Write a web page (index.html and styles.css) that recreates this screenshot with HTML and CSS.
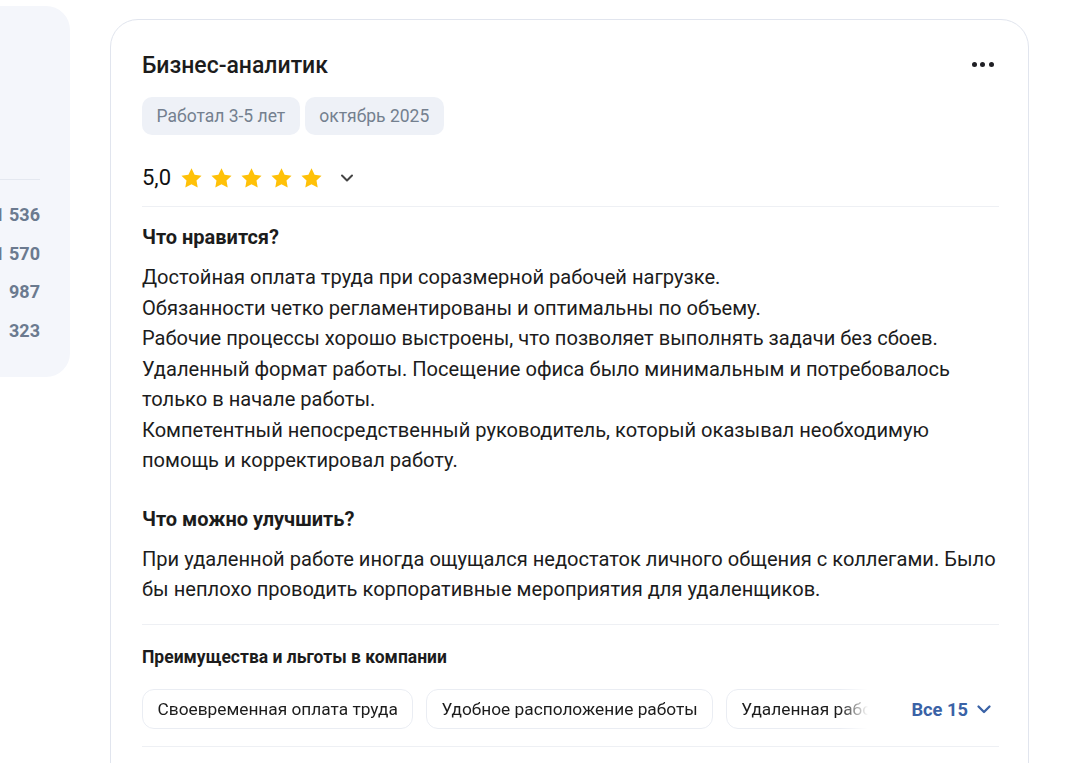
FILE: index.html
```html
<!DOCTYPE html>
<html lang="ru">
<head>
<meta charset="utf-8">
<title>Отзыв</title>
<link rel="stylesheet" href="styles.css">
</head>
<body>
<div class="page">
  <aside class="side">
    <div class="side-top"></div>
    <div class="side-sep"></div>
    <ul class="side-list">
      <li>1 536</li>
      <li>1 570</li>
      <li>987</li>
      <li>323</li>
    </ul>
  </aside>
  <article class="card">
    <div class="head">
      <h2 class="title">Бизнес-аналитик</h2>
      <button class="more" aria-label="Ещё"><span></span><span></span><span></span></button>
    </div>
    <div class="tags">
      <span class="tag">Работал 3-5 лет</span>
      <span class="tag">октябрь 2025</span>
    </div>
    <div class="rating">
      <span class="score">5,0</span>
      <span class="stars">
        <svg viewBox="0 0 24 24"><path d="M12 2.2l2.95 6.1 6.7.95-4.85 4.7 1.15 6.65L12 17.45 6.05 20.6 7.2 13.950 2.35 9.25l6.7-.95z"/></svg>
        <svg viewBox="0 0 24 24"><path d="M12 2.2l2.95 6.1 6.7.95-4.85 4.7 1.15 6.65L12 17.45 6.05 20.6 7.2 13.95 2.35 9.25l6.7-.95z"/></svg>
        <svg viewBox="0 0 24 24"><path d="M12 2.2l2.95 6.1 6.7.95-4.85 4.7 1.15 6.65L12 17.45 6.05 20.6 7.2 13.95 2.35 9.25l6.7-.95z"/></svg>
        <svg viewBox="0 0 24 24"><path d="M12 2.2l2.95 6.1 6.7.95-4.85 4.7 1.15 6.65L12 17.45 6.05 20.6 7.2 13.95 2.35 9.25l6.7-.95z"/></svg>
        <svg viewBox="0 0 24 24"><path d="M12 2.2l2.95 6.1 6.7.95-4.85 4.7 1.15 6.65L12 17.45 6.05 20.6 7.2 13.95 2.35 9.25l6.7-.95z"/></svg>
      </span>
      <svg class="chev" viewBox="0 0 16 16"><path d="M3 5.5l5 5 5-5" fill="none" stroke="currentColor" stroke-width="2" stroke-linecap="round" stroke-linejoin="round"/></svg>
    </div>
    <div class="sep"></div>
    <section class="block">
      <h3 class="block-title">Что нравится?</h3>
      <p class="text">Достойная оплата труда при соразмерной рабочей нагрузке.<br>Обязанности четко регламентированы и оптимальны по объему.<br>Рабочие процессы хорошо выстроены, что позволяет выполнять задачи без сбоев.<br>Удаленный формат работы. Посещение офиса было минимальным и потребовалось только в начале работы.<br>Компетентный непосредственный руководитель, который оказывал необходимую помощь и корректировал работу.</p>
    </section>
    <section class="block block-2">
      <h3 class="block-title">Что можно улучшить?</h3>
      <p class="text">При удаленной работе иногда ощущался недостаток личного общения с коллегами. Было бы неплохо проводить корпоративные мероприятия для удаленщиков.</p>
    </section>
    <div class="sep sep-2"></div>
    <section class="benefits">
      <h4 class="benefits-title">Преимущества и льготы в компании</h4>
      <div class="benefits-row">
        <div class="chips">
          <span class="chip">Своевременная оплата труда</span>
          <span class="chip">Удобное расположение работы</span>
          <span class="chip">Удаленная работа</span>
          <span class="chip">Гибкий график</span>
        </div>
        <button class="all">Все 15
          <svg viewBox="0 0 18 18"><path d="M3.5 6.5l5.5 5.5 5.5-5.5" fill="none" stroke="currentColor" stroke-width="2.3" stroke-linecap="round" stroke-linejoin="round"/></svg>
        </button>
      </div>
    </section>
    <div class="sep sep-3"></div>
  </article>
</div>
</body>
</html>
```

FILE: styles.css
```css
* { box-sizing: border-box; }
html, body { margin: 0; padding: 0; background: #fff; }
body {
  font-family: Roboto, "Noto Sans", "Liberation Sans", sans-serif;
  color: #1a1a1a;
  height: 763px;
  overflow: hidden;
}
.page {
  display: flex;
  align-items: flex-start;
}
.side {
  margin-left: -230px;
  margin-top: 6px;
  width: 300px;
  height: 371px;
  background: #f4f6fb;
  border-radius: 0 24px 24px 0;
  padding: 0 30px 0 0;
  flex-shrink: 0;
}
.side-top { height: 173px; }
.side-sep {
  height: 1px;
  background: #e4e8f0;
}
.side-list {
  list-style: none;
  margin: 0;
  padding: 25px 0 0;
  display: flex;
  flex-direction: column;
  gap: 18.7px;
  text-align: right;
}
.side-list li {
  font-size: 18px;
  line-height: 20px;
  font-weight: 700;
  color: #6b7a8f;
}
.card {
  margin-left: 40px;
  margin-top: 19px;
  width: 919px;
  flex-shrink: 0;
  height: 900px;
  border: 1px solid #e1e5ee;
  border-radius: 28px;
  padding: 32px 29px 0 31px;
}
.head {
  display: flex;
  align-items: center;
  justify-content: space-between;
  height: 28px;
}
.title {
  margin: 0;
  font-size: 23px;
  line-height: 28px;
  font-weight: 500;
  color: #1c1c1c;
}
.more {
  display: flex;
  gap: 3.7px;
  border: 0;
  background: none;
  padding: 0;
  margin-right: 5px;
  margin-top: -4px;
}
.more span {
  width: 5px;
  height: 5px;
  border-radius: 50%;
  background: #1f1f24;
}
.tags {
  display: flex;
  gap: 5px;
  margin-top: 17px;
}
.tag {
  display: inline-flex;
  align-items: center;
  height: 38px;
  padding: 0 14.5px;
  background: #eef1f7;
  border-radius: 10px;
  font-size: 17.5px;
  color: #74808f;
}
.rating {
  display: flex;
  align-items: center;
  margin-top: 28px;
  height: 30px;
}
.score {
  font-size: 22px;
  line-height: 30px;
  color: #111;
  margin-right: 8px;
}
.stars {
  display: flex;
  gap: 5px;
}
.stars svg {
  width: 25px;
  height: 25px;
  fill: #ffc107;
}
.chev {
  width: 16px;
  height: 16px;
  margin-left: 15px;
  color: #444;
}
.sep {
  height: 1px;
  background: #eef0f4;
  margin-top: 13px;
}
.block { margin-top: 17px; }
.block-2 { margin-top: 30px; }
.block-title {
  margin: 0;
  font-size: 20px;
  line-height: 26px;
  font-weight: 700;
  color: #1c1c1c;
}
.text {
  margin: 12px 0 0;
  font-size: 20.1px;
  line-height: 30.5px;
  color: #1c1c1c;
}
.sep-2 { margin-top: 19.5px; }
.benefits { margin-top: 21px; }
.benefits-title {
  margin: 0;
  font-size: 17.5px;
  line-height: 22px;
  font-weight: 700;
  color: #1c1c1c;
}
.benefits-row {
  display: flex;
  align-items: center;
  margin-top: 21px;
}
.chips {
  display: flex;
  gap: 12.5px;
  width: 726px;
  overflow: hidden;
  flex-shrink: 0;
  -webkit-mask-image: linear-gradient(to right, #000 698px, transparent 726px);
  mask-image: linear-gradient(to right, #000 698px, transparent 726px);
}
.chip {
  flex-shrink: 0;
  display: inline-flex;
  align-items: center;
  height: 40px;
  padding: 0 14.5px;
  border: 1px solid #eaedf3;
  border-radius: 12px;
  font-size: 17.3px;
  color: #1c1c1c;
  white-space: nowrap;
}
.all {
  margin-left: auto;
  display: flex;
  align-items: center;
  gap: 7px;
  border: 0;
  background: none;
  padding: 0 6px 0 0;
  font-family: inherit;
  font-size: 18.3px;
  font-weight: 700;
  color: #3a62a6;
}
.all svg { width: 18px; height: 18px; }
.sep-3 { margin-top: 17px; }
```
